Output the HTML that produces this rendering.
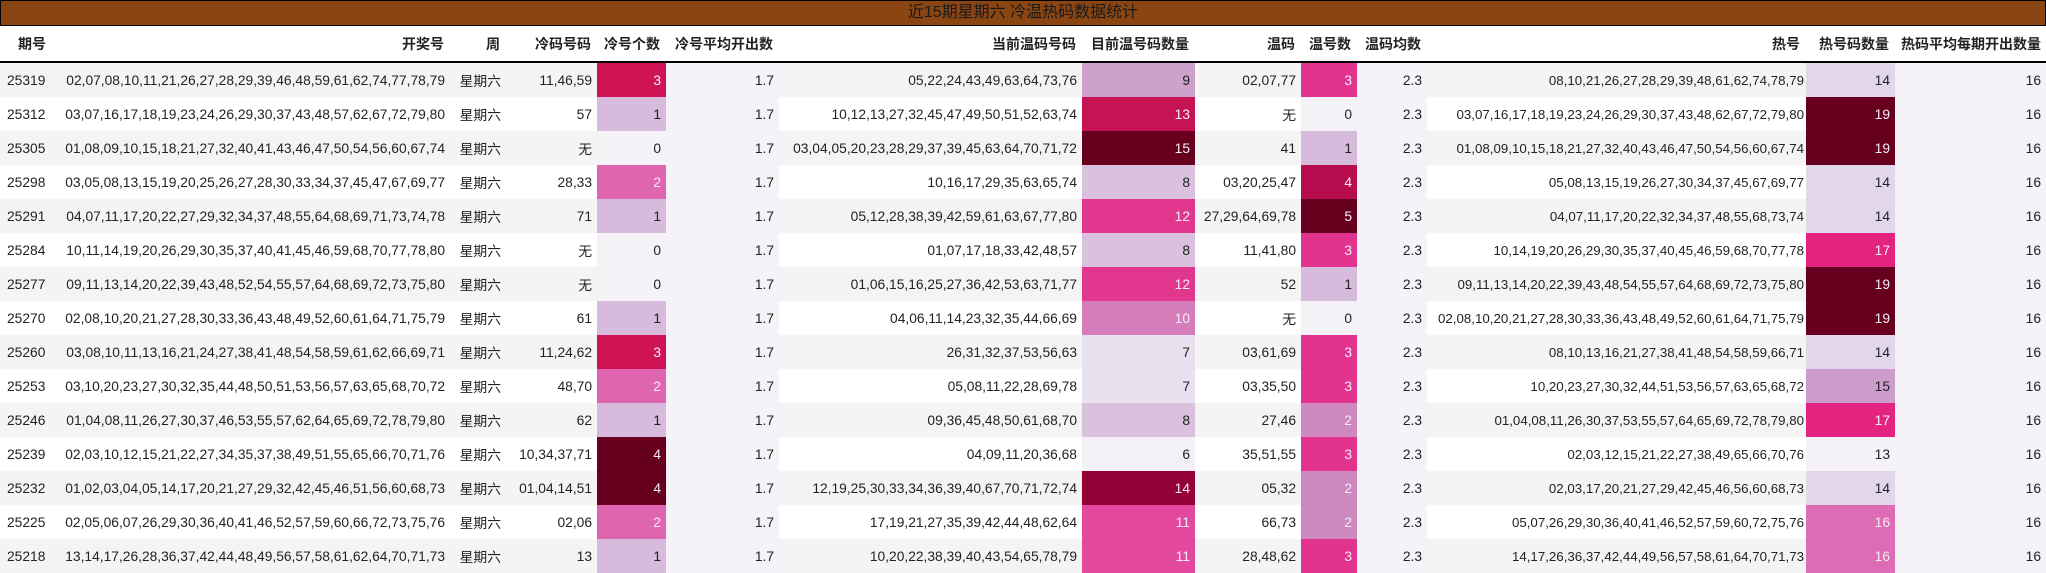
<!DOCTYPE html>
<html><head><meta charset="utf-8"><style>
html,body{margin:0;padding:0;background:#fff;width:2046px;height:573px;overflow:hidden}
body{font-family:"Liberation Sans","Noto Sans CJK SC",sans-serif;font-size:13.8px;color:#222}
.title{height:24px;background:#8B4513;border:1px solid #000;text-align:center;font-size:16px;line-height:24px;color:#1a1a1a}
table{border-collapse:collapse;table-layout:fixed;width:2046px}
th{height:35px;font-weight:bold;text-align:right;padding:0 6px;border-bottom:2px solid #000;white-space:nowrap;font-size:14px}
td{height:34px;padding:0 5px;text-align:right;white-space:nowrap;overflow:hidden}
tr.o td{background:#f4f4f4}
tr.e td{background:#fff}
tr td.a{background:#f5f3f8}
td.l{text-align:left;padding-left:7px}
td.hot{font-size:13.3px;padding-right:2px;padding-left:0;overflow:visible}
.w{color:#f3eef3}
</style></head><body>
<div class="title">近15期星期六 冷温热码数据统计</div>
<table>
<colgroup>
<col style="width:55px"><col style="width:395px"><col style="width:56px"><col style="width:91px"><col style="width:69px"><col style="width:113px"><col style="width:303px"><col style="width:113px"><col style="width:106px"><col style="width:56px"><col style="width:70px"><col style="width:379px"><col style="width:89px"><col style="width:151px">
</colgroup>
<tr><th style="text-align:left;padding-left:18px">期号</th><th>开奖号</th><th>周</th><th>冷码号码</th><th>冷号个数</th><th>冷号平均开出数</th><th>当前温码号码</th><th>目前温号码数量</th><th>温码</th><th>温号数</th><th>温码均数</th><th>热号</th><th>热号码数量</th><th>热码平均每期开出数量</th></tr>
<tbody id="b"></tbody>
</table>
<script>
var D=[
["25319","02,07,08,10,11,21,26,27,28,29,39,46,48,59,61,62,74,77,78,79","11,46,59",3,"05,22,24,43,49,63,64,73,76",9,"02,07,77",3,"08,10,21,26,27,28,29,39,48,61,62,74,78,79",14],
["25312","03,07,16,17,18,19,23,24,26,29,30,37,43,48,57,62,67,72,79,80","57",1,"10,12,13,27,32,45,47,49,50,51,52,63,74",13,"无",0,"03,07,16,17,18,19,23,24,26,29,30,37,43,48,62,67,72,79,80",19],
["25305","01,08,09,10,15,18,21,27,32,40,41,43,46,47,50,54,56,60,67,74","无",0,"03,04,05,20,23,28,29,37,39,45,63,64,70,71,72",15,"41",1,"01,08,09,10,15,18,21,27,32,40,43,46,47,50,54,56,60,67,74",19],
["25298","03,05,08,13,15,19,20,25,26,27,28,30,33,34,37,45,47,67,69,77","28,33",2,"10,16,17,29,35,63,65,74",8,"03,20,25,47",4,"05,08,13,15,19,26,27,30,34,37,45,67,69,77",14],
["25291","04,07,11,17,20,22,27,29,32,34,37,48,55,64,68,69,71,73,74,78","71",1,"05,12,28,38,39,42,59,61,63,67,77,80",12,"27,29,64,69,78",5,"04,07,11,17,20,22,32,34,37,48,55,68,73,74",14],
["25284","10,11,14,19,20,26,29,30,35,37,40,41,45,46,59,68,70,77,78,80","无",0,"01,07,17,18,33,42,48,57",8,"11,41,80",3,"10,14,19,20,26,29,30,35,37,40,45,46,59,68,70,77,78",17],
["25277","09,11,13,14,20,22,39,43,48,52,54,55,57,64,68,69,72,73,75,80","无",0,"01,06,15,16,25,27,36,42,53,63,71,77",12,"52",1,"09,11,13,14,20,22,39,43,48,54,55,57,64,68,69,72,73,75,80",19],
["25270","02,08,10,20,21,27,28,30,33,36,43,48,49,52,60,61,64,71,75,79","61",1,"04,06,11,14,23,32,35,44,66,69",10,"无",0,"02,08,10,20,21,27,28,30,33,36,43,48,49,52,60,61,64,71,75,79",19],
["25260","03,08,10,11,13,16,21,24,27,38,41,48,54,58,59,61,62,66,69,71","11,24,62",3,"26,31,32,37,53,56,63",7,"03,61,69",3,"08,10,13,16,21,27,38,41,48,54,58,59,66,71",14],
["25253","03,10,20,23,27,30,32,35,44,48,50,51,53,56,57,63,65,68,70,72","48,70",2,"05,08,11,22,28,69,78",7,"03,35,50",3,"10,20,23,27,30,32,44,51,53,56,57,63,65,68,72",15],
["25246","01,04,08,11,26,27,30,37,46,53,55,57,62,64,65,69,72,78,79,80","62",1,"09,36,45,48,50,61,68,70",8,"27,46",2,"01,04,08,11,26,30,37,53,55,57,64,65,69,72,78,79,80",17],
["25239","02,03,10,12,15,21,22,27,34,35,37,38,49,51,55,65,66,70,71,76","10,34,37,71",4,"04,09,11,20,36,68",6,"35,51,55",3,"02,03,12,15,21,22,27,38,49,65,66,70,76",13],
["25232","01,02,03,04,05,14,17,20,21,27,29,32,42,45,46,51,56,60,68,73","01,04,14,51",4,"12,19,25,30,33,34,36,39,40,67,70,71,72,74",14,"05,32",2,"02,03,17,20,21,27,29,42,45,46,56,60,68,73",14],
["25225","02,05,06,07,26,29,30,36,40,41,46,52,57,59,60,66,72,73,75,76","02,06",2,"17,19,21,27,35,39,42,44,48,62,64",11,"66,73",2,"05,07,26,29,30,36,40,41,46,52,57,59,60,72,75,76",16],
["25218","13,14,17,26,28,36,37,42,44,48,49,56,57,58,61,62,64,70,71,73","13",1,"10,20,22,38,39,40,43,54,65,78,79",11,"28,48,62",3,"14,17,26,36,37,42,44,49,56,57,58,61,64,70,71,73",16]];
var C={0:["#f5f3f8",0],1:["#d6bbdc",0],2:["#df65b0",1],3:["#cf1456",1],4:["#67001f",1]};
var T={6:["#f3f0f7",0],7:["#e8e1ef",0],8:["#dac2df",0],9:["#cea1cd",0],10:["#d77cba",1],11:["#e2489d",1],12:["#e2378f",1],13:["#c51354",1],14:["#940038",1],15:["#67001f",1]};
var W={0:["#f5f3f8",0],1:["#d6bbdc",0],2:["#cd88c0",1],3:["#e2338f",1],4:["#b70d4f",1],5:["#67001f",1]};
var H={13:["#f5f3f8",0],14:["#e2d6ea",0],15:["#cc9dcc",0],16:["#dd6bb5",1],17:["#e2237f",1],19:["#67001f",1]};
function cc(m,v){var c=m[v];return '<td style="background:'+c[0]+'"'+(c[1]?' class="w"':'')+'>'+v+'</td>';}
var h='';
D.forEach(function(r,i){
h+='<tr class="'+(i%2?'e':'o')+'"><td class="l">'+r[0]+'</td><td>'+r[1]+'</td><td>星期六</td><td>'+r[2]+'</td>'+cc(C,r[3])+'<td class="a">1.7</td><td>'+r[4]+'</td>'+cc(T,r[5])+'<td>'+r[6]+'</td>'+cc(W,r[7])+'<td class="a">2.3</td><td class="hot">'+r[8]+'</td>'+cc(H,r[9])+'<td class="a">16</td></tr>';
});
document.getElementById('b').innerHTML=h;
</script>
</body></html>
